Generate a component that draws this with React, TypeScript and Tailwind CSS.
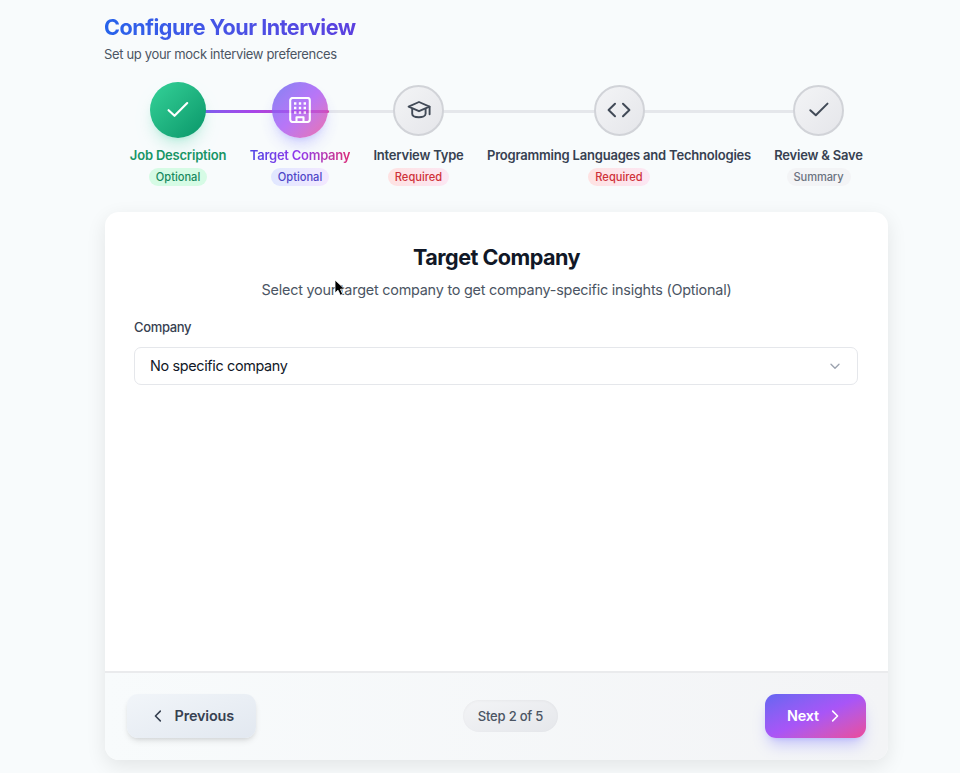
import React from 'react';

interface Step {
  title: string;
  badge: string;
  icon: React.ReactNode;
  column: string;
  circle: string;
  titleStyle: string;
  badgeStyle: string;
}

interface IconProps {
  className?: string;
}

function CheckIcon({ className }: IconProps) {
  return (
    <svg className={className} viewBox="0 0 24 24" fill="none" stroke="currentColor" strokeWidth="2" strokeLinecap="round" strokeLinejoin="round">
      <path d="M3.3 12.2 8.8 17.3 20.5 5.6" />
    </svg>
  );
}

function BuildingIcon() {
  return (
    <svg className="h-[26px] w-[22px]" viewBox="0 0 22 26" fill="none" stroke="currentColor" strokeWidth="2.1" strokeLinejoin="round">
      <rect x="1.2" y="1" width="19.6" height="24" rx="2.4" />
      <path d="M7.5 25v-4.7h7V25" />
      <path d="M5 6.5h2.4M9.8 6.5h2.4M14.6 6.5H17M5 11h2.4M9.8 11h2.4M14.6 11H17M5 15.5h2.4M9.8 15.5h2.4M14.6 15.5H17" strokeWidth="2.3" />
    </svg>
  );
}

function CapIcon() {
  return (
    <svg className="h-5 w-6" viewBox="0 0 24 20" fill="none" stroke="currentColor" strokeWidth="1.9" strokeLinecap="round" strokeLinejoin="round">
      <path d="M1.6 6.6 12 2l10.5 4.6L12 11.2z" />
      <path d="M5.2 9v4.8c0 4.6 13.4 4.6 13.4 0V9M22.6 6.8v7.4" />
    </svg>
  );
}

function CodeIcon() {
  return (
    <svg className="h-[18px] w-[26px]" viewBox="0 0 26 18" fill="none" stroke="currentColor" strokeWidth="2" strokeLinecap="round" strokeLinejoin="round">
      <path d="M9 2.8 2.6 9 9 15.2M17 2.8 23.4 9 17 15.2" />
    </svg>
  );
}

function ChevronIcon({ className, d }: IconProps & { d: string }) {
  return (
    <svg className={className} viewBox="0 0 12 12" fill="none" stroke="currentColor" strokeWidth="1.35" strokeLinecap="round" strokeLinejoin="round">
      <path d={d} />
    </svg>
  );
}

const idleCircle = 'size-[51px] border-2 border-[#d1d3d8] bg-linear-to-br from-[#f3f4f6] to-[#e5e6ea] text-[#414a57]';

const steps: Step[] = [
  {
    title: 'Job Description',
    badge: 'Optional',
    icon: <CheckIcon className="size-[26px]" />,
    column: 'w-[97px]',
    circle: 'size-14 bg-linear-to-br from-[#34d399] to-[#059669] text-white shadow-lg shadow-emerald-500/20',
    titleStyle: 'tracking-[-0.2px] text-[#179566]',
    badgeStyle: 'bg-[#d6fbe5] text-[#16895f]',
  },
  {
    title: 'Target Company',
    badge: 'Optional',
    icon: <BuildingIcon />,
    column: 'w-[100px]',
    circle: 'size-14 bg-linear-to-br from-[#6366f1] via-[#a855f7] to-[#ec4899] text-white opacity-80 shadow-lg shadow-indigo-500/30',
    titleStyle: 'tracking-[-0.25px] bg-linear-to-r from-[#4f46e5] via-[#9333ea] to-[#db2777] bg-clip-text text-transparent',
    badgeStyle: 'bg-linear-to-r from-[#e0e7ff] to-[#f3e8ff] text-[#4f46c8]',
  },
  {
    title: 'Interview Type',
    badge: 'Required',
    icon: <CapIcon />,
    column: 'w-[90px]',
    circle: idleCircle,
    titleStyle: 'tracking-[-0.2px] text-[#374151]',
    badgeStyle: 'bg-linear-to-r from-[#fee2e2] to-[#fce7f3] text-[#cf3038]',
  },
  {
    title: 'Programming Languages and Technologies',
    badge: 'Required',
    icon: <CodeIcon />,
    column: 'w-[264px]',
    circle: idleCircle,
    titleStyle: 'tracking-[-0.2px] text-[#374151]',
    badgeStyle: 'bg-linear-to-r from-[#fee2e2] to-[#fce7f3] text-[#cf3038]',
  },
  {
    title: 'Review & Save',
    badge: 'Summary',
    icon: <CheckIcon className="size-6" />,
    column: 'w-[88px]',
    circle: idleCircle,
    titleStyle: 'tracking-[-0.2px] text-[#374151]',
    badgeStyle: 'bg-[#f3f4f6] text-[#6b7280] tracking-[-0.1px]',
  },
];

function Stepper() {
  return (
    <div className="relative mt-[18px] flex gap-[23.5px] pl-[24.5px]">
      <div className="absolute left-[73px] top-[28px] h-[3px] w-[641px] bg-[#e5e7eb]">
        <div className="h-full w-[151px] rounded-full bg-linear-to-r from-[#6366f1] via-[#a845e8] to-[#db3a9d]" />
      </div>
      {steps.map((step) => (
        <div key={step.title} className={`relative flex shrink-0 flex-col items-center ${step.column}`}>
          <div className="flex h-14 items-center">
            <div className={`flex items-center justify-center rounded-full ${step.circle}`}>{step.icon}</div>
          </div>
          <div className={`mt-[7px] whitespace-nowrap text-[13px] font-semibold leading-5 ${step.titleStyle}`}>{step.title}</div>
          <div className={`mt-[3px] rounded-full px-[7px] text-[11.1px] font-medium leading-[18px] ${step.badgeStyle}`}>
            {step.badge}
          </div>
        </div>
      ))}
    </div>
  );
}

function Cursor() {
  return (
    <svg className="absolute left-[229px] top-[67px] h-[18px] w-[12px]" viewBox="0 0 12 18">
      <path d="M1 1v13l3-2.8 2.3 5.1 2.4-1.1-2.2-5 4.2-.1z" fill="#000" stroke="#fff" strokeWidth=".8" />
    </svg>
  );
}

export default function App() {
  return (
    <div className="h-[773px] overflow-hidden bg-[#f8fbfc] font-['Inter',sans-serif]">
      <div className="ml-[105px] w-[783px] pt-[11px]">
        <h1 className="-ml-px w-[252px] whitespace-nowrap bg-linear-to-r from-[#2563eb] to-[#5b40df] bg-clip-text text-[21.6px] font-bold leading-8 tracking-[-0.5px] text-transparent">
          Configure Your Interview
        </h1>
        <p className="-ml-px mt-px text-[13px] leading-5 tracking-[-0.33px] text-[#4b5563]">Set up your mock interview preferences</p>

        <Stepper />

        <div className="relative mt-[26px] flex h-[548px] flex-col overflow-hidden rounded-[14px] bg-white shadow-[0_6px_20px_rgba(0,0,0,0.09)]">
          <div className="flex-1 px-[29px] pt-[29px]">
            <h2 className="text-center text-[21.6px] font-bold leading-8 tracking-[-0.55px] text-[#111827]">Target Company</h2>
            <p className="mt-[6px] text-center text-[14.4px] leading-[22px] tracking-[-0.22px] text-[#4b5563]">
              Select your target company to get company-specific insights (Optional)
            </p>
            <label className="mt-4 block text-[13px] font-medium leading-5 tracking-[-0.35px] text-[#374151]">Company</label>
            <button className="mt-[10px] flex h-[38px] w-[724px] items-center justify-between rounded-[7px] border border-[#e5e7eb] pl-[15px] pr-4 text-[14.4px] tracking-[-0.34px] text-[#111827]">
              No specific company
              <ChevronIcon className="size-3 text-[#9ca3af]" d="M2 4.2 6 8.2 10 4.2" />
            </button>
          </div>
          <div className="flex h-[89px] items-center justify-between border-t-2 border-[#eaebed] bg-linear-to-r from-[#f8fbfc] to-[#f3f4f6] px-[22px] pb-px">
            <button className="flex h-11 w-[129px] items-center rounded-[11px] bg-linear-to-br from-[#f1f5f9] to-[#e2e8f0] pl-[24px] text-[14.4px] font-semibold tracking-[-0.15px] text-[#374151] shadow-md shadow-black/10">
              <ChevronIcon className="mr-[9.5px] size-[14px]" d="M8 1.8 3.8 6 8 10.2" />
              Previous
            </button>
            <span className="rounded-full bg-linear-to-br from-[#f3f4f6] to-[#e5e7eb] px-[14.5px] text-[13px] font-medium leading-8 tracking-[-0.2px] text-[#4b5563] shadow-[inset_0_1px_3px_rgba(0,0,0,0.04)]">
              Step 2 of 5
            </span>
            <button className="flex h-11 w-[101px] items-center rounded-[11px] bg-linear-to-br from-[#6366f1] via-[#a855f7] to-[#ec4899] pl-[22px] text-[14.4px] font-semibold tracking-[-0.15px] text-white shadow-lg shadow-indigo-500/30">
              Next
              <ChevronIcon className="ml-[9px] size-[14px]" d="M4 1.8 8.2 6 4 10.2" />
            </button>
          </div>
          <Cursor />
        </div>
      </div>
    </div>
  );
}
